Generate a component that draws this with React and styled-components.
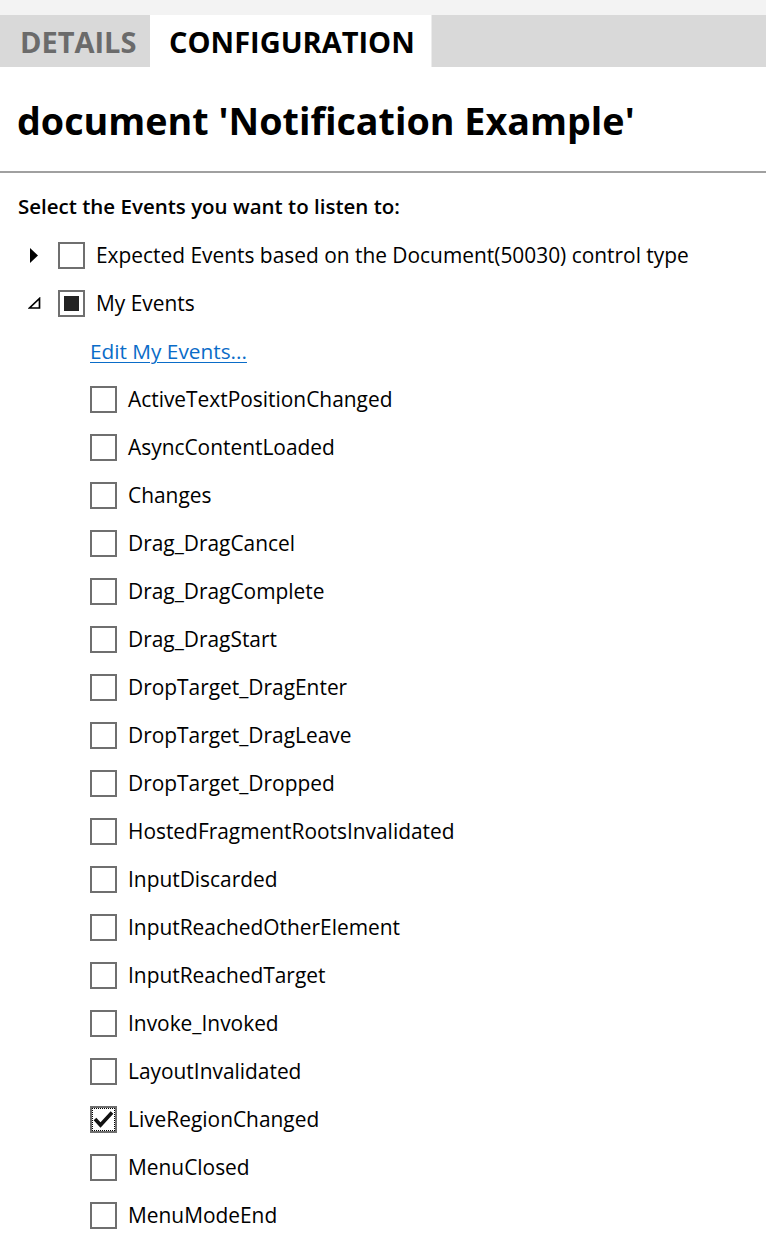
import React from "react";
import styled, { createGlobalStyle } from "styled-components";

const Global = createGlobalStyle`
  html, body { margin: 0; padding: 0; background: #ffffff; }
  body { font-family: "Open Sans", "Noto Sans", sans-serif; color: #000; }
`;

const Page = styled.div`
  width: 766px;
  height: 1244px;
  overflow: hidden;
  background: #fff;
`;

const TopStrip = styled.div`
  height: 15px;
  background: #f3f3f3;
`;

const TabBar = styled.div`
  display: flex;
  height: 52px;
  background: #d9d9d9;
`;

const Tab = styled.div`
  display: flex;
  align-items: center;
  box-sizing: border-box;
  width: ${(p) => p.$w}px;
  padding-left: ${(p) => p.$pl}px;
  background: ${(p) => (p.$active ? "#ffffff" : "transparent")};
  color: ${(p) => (p.$active ? "#000000" : "#6b6b6b")};
  font-weight: 700;
  font-size: 29px;
  border-right: ${(p) => (p.$active ? "1px solid #ececec" : "none")};
`;

const Header = styled.div`
  height: 104px;
  display: flex;
  align-items: center;
  padding-left: 17px;
  border-bottom: 2px solid #a0a0a0;
`;

const Title = styled.h1`
  margin: 0;
  font-size: 37.7px;
  font-weight: 700;
  margin-top: 2px;
`;

const Content = styled.div`
  padding: 19px 0 0 18px;
`;

const Prompt = styled.div`
  font-size: 20.5px;
  font-weight: 600;
  line-height: 28px;
  height: 28px;
`;

const Tree = styled.div`
  margin-top: 11px;
`;

const Row = styled.div`
  display: flex;
  align-items: center;
  height: 48px;
  padding-left: ${(p) => p.$indent}px;
  font-size: 20.9px;
`;

const Expander = styled.div`
  width: 28px;
  height: 20px;
  display: flex;
  align-items: center;
  justify-content: center;
  margin-right: 10px;
`;

const Box = styled.div`
  position: relative;
  box-sizing: border-box;
  width: 27px;
  height: 27px;
  border: 2px solid #6f6f6f;
  background: #fff;
  margin-right: 11px;
  flex-shrink: 0;
  display: flex;
  align-items: center;
  justify-content: center;
`;

const MixedMark = styled.div`
  width: 15px;
  height: 15px;
  background: #222;
`;

const FocusRing = styled.div`
  position: absolute;
  inset: 0;
  border: 1px dotted #000;
  pointer-events: none;
`;

const Label = styled.span`
  white-space: nowrap;
  color: #000;
`;

const Link = styled.a`
  color: #0a6cc8;
  text-decoration: underline;
  text-underline-offset: 3px;
  text-decoration-thickness: 1px;
  font-size: 20.8px;
  cursor: pointer;
`;

const CollapsedArrow = () => (
  <svg width="10" height="15" viewBox="0 0 10 15">
    <path d="M1 0 L9 7.5 L1 15 Z" fill="#000" />
  </svg>
);

const ExpandedArrow = () => (
  <svg width="13" height="12" viewBox="0 0 13 12">
    <path d="M11.5 1.5 L11.5 11 L1.5 11 Z" fill="none" stroke="#000" strokeWidth="1.7" strokeLinejoin="miter" />
  </svg>
);

const Check = () => (
  <svg width="21" height="18" viewBox="0 0 21 18" style={{ position: "relative", zIndex: 1 }}>
    <path d="M2 9 L7.5 15 L19 2.5" fill="none" stroke="#111" strokeWidth="3.6" />
  </svg>
);

const items = [
  "ActiveTextPositionChanged",
  "AsyncContentLoaded",
  "Changes",
  "Drag_DragCancel",
  "Drag_DragComplete",
  "Drag_DragStart",
  "DropTarget_DragEnter",
  "DropTarget_DragLeave",
  "DropTarget_Dropped",
  "HostedFragmentRootsInvalidated",
  "InputDiscarded",
  "InputReachedOtherElement",
  "InputReachedTarget",
  "Invoke_Invoked",
  "LayoutInvalidated",
  "LiveRegionChanged",
  "MenuClosed",
  "MenuModeEnd",
];

export default function App() {
  return (
    <Page>
      <Global />
      <TopStrip />
      <TabBar>
        <Tab $w={150} $pl={20}>DETAILS</Tab>
        <Tab $w={282} $pl={19} $active>CONFIGURATION</Tab>
      </TabBar>
      <Header>
        <Title>document 'Notification Example'</Title>
      </Header>
      <Content>
        <Prompt>Select the Events you want to listen to:</Prompt>
      </Content>
      <Tree>
        <Row $indent={20}>
          <Expander><CollapsedArrow /></Expander>
          <Box />
          <Label>Expected Events based on the Document(50030) control type</Label>
        </Row>
        <Row $indent={20}>
          <Expander><ExpandedArrow /></Expander>
          <Box><MixedMark /></Box>
          <Label>My Events</Label>
        </Row>
        <Row $indent={90}>
          <Link>Edit My Events...</Link>
        </Row>
        {items.map((name) => {
          const checked = name === "LiveRegionChanged";
          return (
            <Row key={name} $indent={90}>
              <Box>
                {checked && <Check />}
                {checked && <FocusRing />}
              </Box>
              <Label>{name}</Label>
            </Row>
          );
        })}
      </Tree>
    </Page>
  );
}
